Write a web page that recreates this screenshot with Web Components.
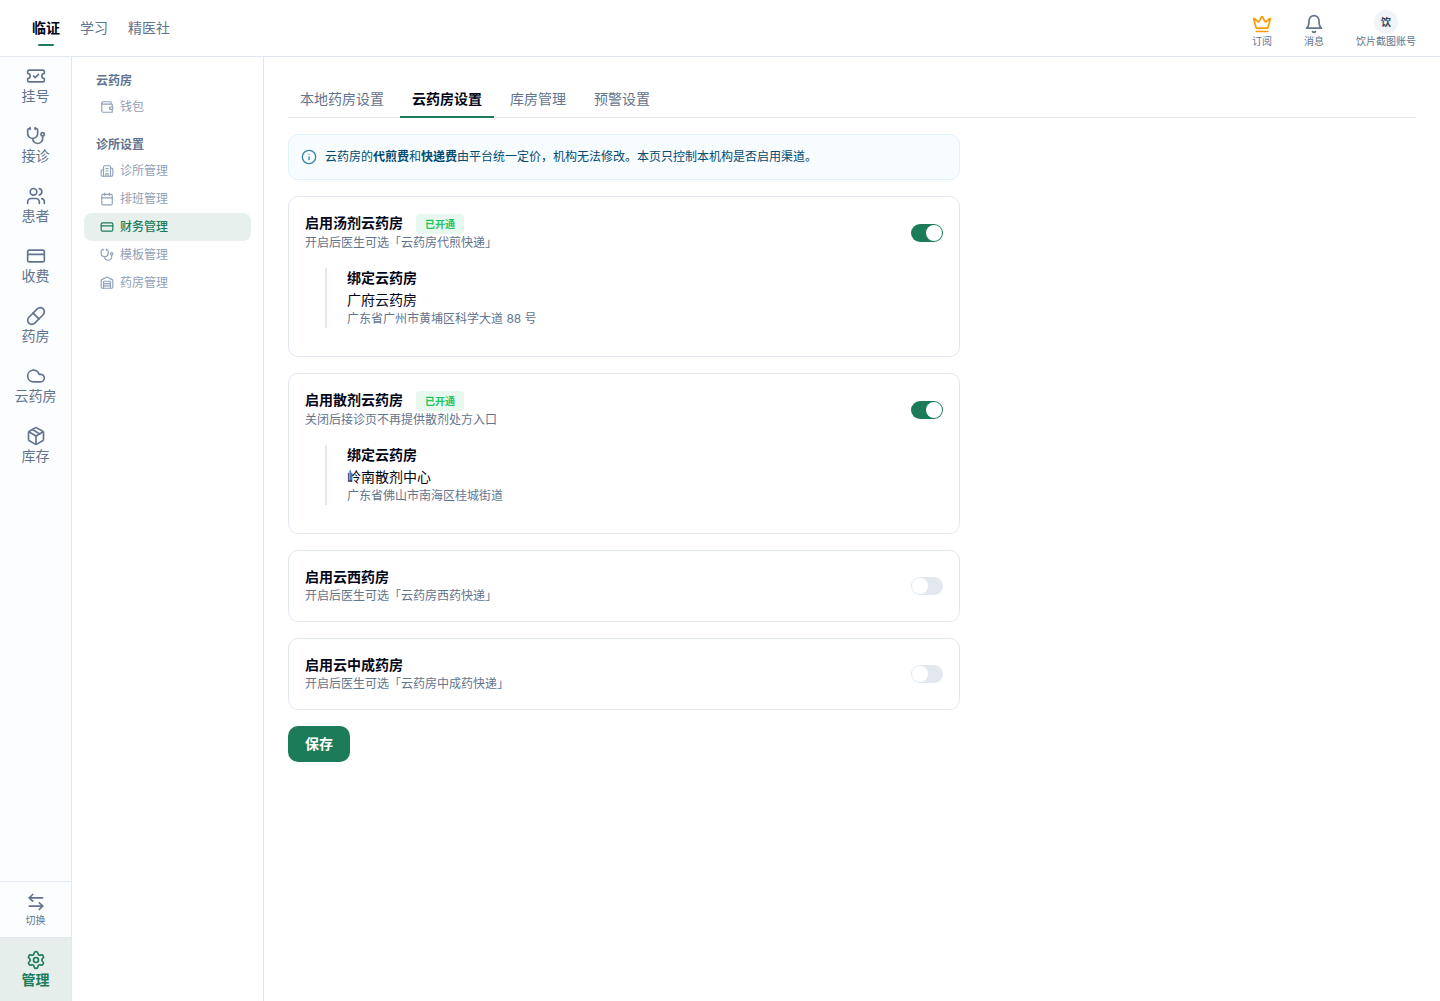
<!DOCTYPE html>
<html lang="zh-CN">
<head>
<meta charset="utf-8">
<meta name="viewport" content="width=device-width, initial-scale=1">
<title>云药房设置</title>
<style>
	:root {
		--primary: #1c7c5a;
		--primary-soft: #e8f0ee;
		--ink: #020618;
		--muted: #62748e;
		--faint: #90a1b9;
		--line: #e2e8f0;
	}
	body {
		margin: 0;
		color: var(--ink);
		background: #fff;
		font: 14px/20px Inter, "Noto Sans CJK SC", sans-serif;
	}
</style>
</head>
<body>
<app-shell>
	<top-bar slot="header"></top-bar>
	<nav-rail slot="rail"></nav-rail>
	<side-menu slot="menu"></side-menu>

	<tab-bar active="云药房设置"></tab-bar>
	<settings-form>
		<info-banner>云药房的<strong>代煎费</strong>和<strong>快递费</strong>由平台统一定价，机构无法修改。本页只控制本机构是否启用渠道。</info-banner>
		<channel-card heading="启用汤剂云药房" badge="已开通" on>
			<span slot="hint">开启后医生可选「云药房代煎快递」</span>
			<bound-pharmacy slot="detail" name="广府云药房">广东省广州市黄埔区科学大道 88 号</bound-pharmacy>
		</channel-card>
		<channel-card heading="启用散剂云药房" badge="已开通" on>
			<span slot="hint">关闭后接诊页不再提供散剂处方入口</span>
			<bound-pharmacy slot="detail" name="岭南散剂中心">广东省佛山市南海区桂城街道</bound-pharmacy>
		</channel-card>
		<channel-card heading="启用云西药房">
			<span slot="hint">开启后医生可选「云药房西药快递」</span>
		</channel-card>
		<channel-card heading="启用云中成药房">
			<span slot="hint">开启后医生可选「云药房中成药快递」</span>
		</channel-card>
	</settings-form>
</app-shell>

<script>
const ICONS = {
	ticket: `<path d="M2 9a3 3 0 0 1 0 6v2a2 2 0 0 0 2 2h16a2 2 0 0 0 2-2v-2a3 3 0 0 1 0-6V7a2 2 0 0 0-2-2H4a2 2 0 0 0-2 2Z"/><path d="m9 12 2 2 4-4"/>`,
	stethoscope: `<path d="M11 2v2"/><path d="M5 2v2"/><path d="M5 3H4a2 2 0 0 0-2 2v4a6 6 0 0 0 12 0V5a2 2 0 0 0-2-2h-1"/><path d="M8 15a6 6 0 0 0 12 0v-3"/><circle cx="20" cy="10" r="2"/>`,
	users: `<path d="M16 21v-2a4 4 0 0 0-4-4H6a4 4 0 0 0-4 4v2"/><circle cx="9" cy="7" r="4"/><path d="M22 21v-2a4 4 0 0 0-3-3.87"/><path d="M16 3.13a4 4 0 0 1 0 7.75"/>`,
	card: `<rect width="20" height="14" x="2" y="5" rx="2"/><path d="M2 10h20"/>`,
	pill: `<path d="m10.5 20.5 10-10a4.95 4.95 0 1 0-7-7l-10 10a4.95 4.95 0 1 0 7 7Z"/><path d="m8.5 8.5 7 7"/>`,
	cloud: `<path d="M17.5 19H9a7 7 0 1 1 6.71-9h1.79a4.5 4.5 0 1 1 0 9Z"/>`,
	box: `<path d="M11 21.73a2 2 0 0 0 2 0l7-4A2 2 0 0 0 21 16V8a2 2 0 0 0-1-1.73l-7-4a2 2 0 0 0-2 0l-7 4A2 2 0 0 0 3 8v8a2 2 0 0 0 1 1.73z"/><path d="M12 22V12"/><path d="M3.29 7 12 12l8.71-5"/><path d="m7.5 4.27 9 5.15"/>`,
	swap: `<path d="M8 3 4 7l4 4"/><path d="M4 7h16"/><path d="m16 21 4-4-4-4"/><path d="M20 17H4"/>`,
	gear: `<path d="M9.671 4.136a2.34 2.34 0 0 1 4.659 0 2.34 2.34 0 0 0 3.319 1.915 2.34 2.34 0 0 1 2.33 4.033 2.34 2.34 0 0 0 0 3.831 2.34 2.34 0 0 1-2.33 4.033 2.34 2.34 0 0 0-3.319 1.915 2.34 2.34 0 0 1-4.659 0 2.34 2.34 0 0 0-3.32-1.915 2.34 2.34 0 0 1-2.33-4.033 2.34 2.34 0 0 0 0-3.831A2.34 2.34 0 0 1 6.35 6.051a2.34 2.34 0 0 0 3.319-1.915"/><circle cx="12" cy="12" r="3"/>`,
	crown: `<path d="M11.562 3.266a.5.5 0 0 1 .876 0L15.39 8.87a1 1 0 0 0 1.516.294L21.183 5.5a.5.5 0 0 1 .798.519l-2.834 10.246a1 1 0 0 1-.956.734H5.81a1 1 0 0 1-.957-.734L2.02 6.02a.5.5 0 0 1 .798-.519l4.276 3.664a1 1 0 0 0 1.516-.294z"/><path d="M5 21h14"/>`,
	bell: `<path d="M6 8a6 6 0 0 1 12 0c0 7 3 9 3 9H3s3-2 3-9"/><path d="M10.3 21a1.94 1.94 0 0 0 3.4 0"/>`,
	wallet: `<path d="M17 14h.01"/><path d="M19 7V4a1 1 0 0 0-1-1H5a2 2 0 0 0 0 4h15a1 1 0 0 1 1 1v4h-3a2 2 0 0 0 0 4h3a1 1 0 0 0 1-1v-2a1 1 0 0 0-1-1"/><path d="M3 5v14a2 2 0 0 0 2 2h15a1 1 0 0 0 1-1v-4"/>`,
	clinic: `<path d="M10 12h4"/><path d="M10 8h4"/><path d="M14 21v-3a2 2 0 0 0-4 0v3"/><path d="M6 10H4a2 2 0 0 0-2 2v7a2 2 0 0 0 2 2h16a2 2 0 0 0 2-2V9a2 2 0 0 0-2-2h-2"/><path d="M6 21V5a2 2 0 0 1 2-2h8a2 2 0 0 1 2 2v16"/>`,
	calendar: `<path d="M8 2v4"/><path d="M16 2v4"/><rect width="18" height="18" x="3" y="4" rx="2"/><path d="M3 10h18"/>`,
	warehouse: `<path d="M18 21V10a1 1 0 0 0-1-1H7a1 1 0 0 0-1 1v11"/><path d="M22 19a2 2 0 0 1-2 2H4a2 2 0 0 1-2-2V8a2 2 0 0 1 1.132-1.803l7.95-3.974a2 2 0 0 1 1.837 0l7.948 3.974A2 2 0 0 1 22 8z"/><path d="M6 13h12"/><path d="M6 17h12"/>`,
	info: `<circle cx="12" cy="12" r="10"/><path d="M12 16v-4"/><path d="M12 8h.01"/>`,
};

class UiIcon extends HTMLElement {
	constructor() {
		super();
		this.attachShadow({ mode: "open" });
	}

	connectedCallback() {
		this.shadowRoot.innerHTML = `
		<style>
			:host { display: block; flex: none; width: var(--icon-size, 20px); height: var(--icon-size, 20px); }
			svg { display: block; width: 100%; height: 100%; }
		</style>
		<svg viewBox="0 0 24 24" fill="none" stroke="currentColor" stroke-width="2" stroke-linecap="round" stroke-linejoin="round" aria-hidden="true">${ICONS[this.getAttribute("name")]}</svg>`;
	}
}
customElements.define("ui-icon", UiIcon);

class AppShell extends HTMLElement {
	constructor() {
		super();
		this.attachShadow({ mode: "open" }).innerHTML = `
		<style>
			:host { display: flex; flex-direction: column; min-height: 100vh; }
			.body { display: flex; flex: 1; }
			main { flex: 1; min-width: 0; padding: 24px; }
		</style>
		<slot name="header"></slot>
		<div class="body">
			<slot name="rail"></slot>
			<slot name="menu"></slot>
			<main><slot></slot></main>
		</div>`;
	}
}
customElements.define("app-shell", AppShell);

class TopBar extends HTMLElement {
	constructor() {
		super();
		this.attachShadow({ mode: "open" }).innerHTML = `
		<style>
			:host { display: block; border-bottom: 1px solid var(--line); }
			header { display: flex; align-items: center; justify-content: space-between; height: 56px; padding: 0 24px 0 32px; }
			nav, .actions { display: flex; }
			nav { gap: 20px; }
			nav a { position: relative; padding: 8px 0; color: var(--muted); text-decoration: none; }
			nav a.active { color: var(--ink); font-weight: 600; }
			nav a.active::after {
				content: "";
				position: absolute;
				bottom: 0;
				left: 50%;
				width: 16px;
				height: 2px;
				margin-left: -8px;
				border-radius: 1px;
				background: var(--primary);
			}
			.actions { align-items: flex-end; gap: 32px; padding-top: 2px; }
			button {
				display: flex;
				flex-direction: column;
				align-items: center;
				padding: 0;
				border: 0;
				background: none;
				color: var(--muted);
				font: inherit;
				font-size: 10px;
				line-height: 14px;
				cursor: pointer;
			}
			.crown { color: #fe9a00; }
			.avatar { width: 24px; border-radius: 50%; background: #f1f5f9; color: #314158; font-weight: 600; line-height: 24px; }
		</style>
		<header>
			<nav>
				<a class="active" href="#clinic">临证</a>
				<a href="#study">学习</a>
				<a href="#club">精医社</a>
			</nav>
			<div class="actions">
				<button><ui-icon class="crown" name="crown"></ui-icon>订阅</button>
				<button><ui-icon name="bell"></ui-icon>消息</button>
				<button><span class="avatar">饮</span>饮片截图账号</button>
			</div>
		</header>`;
	}
}
customElements.define("top-bar", TopBar);

class NavRail extends HTMLElement {
	constructor() {
		super();
		const items = [
			["ticket", "挂号"],
			["stethoscope", "接诊"],
			["users", "患者"],
			["card", "收费"],
			["pill", "药房"],
			["cloud", "云药房"],
			["box", "库存"],
		];
		this.attachShadow({ mode: "open" }).innerHTML = `
		<style>
			:host {
				display: flex;
				flex-direction: column;
				justify-content: space-between;
				box-sizing: border-box;
				width: 72px;
				border-right: 1px solid var(--line);
				background: #fbfdff;
				color: var(--muted);
			}
			nav { display: flex; flex-direction: column; gap: 20px; padding: 9px 0; }
			a, button { display: flex; flex-direction: column; align-items: center; color: inherit; text-decoration: none; }
			button {
				width: 100%;
				padding: 10px 0 9px;
				border: 0;
				border-top: 1px solid var(--line);
				background: none;
				font: inherit;
				font-size: 10px;
				line-height: 16px;
				cursor: pointer;
			}
			.manage { padding: 12px 0 11px; border-top: 1px solid var(--line); background: #e5eeeb; color: var(--primary); font-weight: 600; }
		</style>
		<nav>${items.map(([icon, label]) => `<a href="#${icon}"><ui-icon name="${icon}"></ui-icon>${label}</a>`).join("")}</nav>
		<div>
			<button><ui-icon name="swap"></ui-icon>切换</button>
			<a class="manage" href="#manage"><ui-icon name="gear"></ui-icon>管理</a>
		</div>`;
	}
}
customElements.define("nav-rail", NavRail);

class SideMenu extends HTMLElement {
	constructor() {
		super();
		const groups = [
			["云药房", [["wallet", "钱包"]]],
			["诊所设置", [
				["clinic", "诊所管理"],
				["calendar", "排班管理"],
				["card", "财务管理"],
				["stethoscope", "模板管理"],
				["warehouse", "药房管理"],
			]],
		];
		this.attachShadow({ mode: "open" }).innerHTML = `
		<style>
			:host {
				--icon-size: 14px;
				display: block;
				box-sizing: border-box;
				width: 192px;
				padding: 16px 12px;
				border-right: 1px solid var(--line);
				font-size: 12px;
				line-height: 16px;
			}
			section + section { margin-top: 16px; }
			h2 { margin: 0 0 4px; padding: 0 12px; color: var(--muted); font-size: 12px; font-weight: 600; }
			a { display: flex; align-items: center; gap: 6px; padding: 6px 16px; border-radius: 8px; color: var(--faint); text-decoration: none; }
			a.active { background: var(--primary-soft); color: var(--primary); font-weight: 500; }
		</style>
		${groups.map(([title, links]) => `
		<section>
			<h2>${title}</h2>
			${links.map(([icon, label]) => `<a href="#${icon}"${label === "财务管理" ? ' class="active"' : ""}><ui-icon name="${icon}"></ui-icon>${label}</a>`).join("")}
		</section>`).join("")}`;
	}
}
customElements.define("side-menu", SideMenu);

class TabBar extends HTMLElement {
	constructor() {
		super();
		this.attachShadow({ mode: "open" });
	}

	connectedCallback() {
		const tabs = ["本地药房设置", "云药房设置", "库房管理", "预警设置"];
		const active = this.getAttribute("active");
		this.shadowRoot.innerHTML = `
		<style>
			:host { display: block; margin-bottom: 16px; }
			div { display: flex; gap: 4px; border-bottom: 1px solid var(--line); }
			button {
				margin-bottom: -1px;
				padding: 8px 12px 7px;
				border: 0;
				border-bottom: 2px solid transparent;
				background: none;
				color: var(--muted);
				font: inherit;
				cursor: pointer;
			}
			button[aria-selected="true"] { border-color: var(--primary); color: var(--ink); font-weight: 600; }
		</style>
		<div role="tablist">
			${tabs.map((tab) => `<button role="tab" aria-selected="${tab === active}">${tab}</button>`).join("")}
		</div>`;
	}
}
customElements.define("tab-bar", TabBar);

class SettingsForm extends HTMLElement {
	constructor() {
		super();
		this.attachShadow({ mode: "open" }).innerHTML = `
		<style>
			:host { display: block; max-width: 672px; }
			form { display: flex; flex-direction: column; align-items: stretch; gap: 16px; }
			button {
				align-self: flex-start;
				padding: 8px 17px;
				border: 0;
				border-radius: 10px;
				background: var(--primary);
				color: #fff;
				font: inherit;
				font-weight: 600;
				cursor: pointer;
			}
		</style>
		<form>
			<slot></slot>
			<button type="button">保存</button>
		</form>`;
	}
}
customElements.define("settings-form", SettingsForm);

class InfoBanner extends HTMLElement {
	constructor() {
		super();
		this.attachShadow({ mode: "open" }).innerHTML = `
		<style>
			:host {
				--icon-size: 16px;
				display: flex;
				align-items: center;
				gap: 8px;
				padding: 12px;
				border: 1px solid #dff2fe;
				border-radius: 10px;
				background: #f7fcff;
				color: #024a70;
				font-size: 12px;
			}
			ui-icon { color: #3b82a6; }
			::slotted(strong) { font-weight: 600; }
		</style>
		<ui-icon name="info"></ui-icon>
		<div><slot></slot></div>`;
	}
}
customElements.define("info-banner", InfoBanner);

class ToggleSwitch extends HTMLElement {
	constructor() {
		super();
		this.attachShadow({ mode: "open" });
	}

	connectedCallback() {
		this.shadowRoot.innerHTML = `
		<style>
			:host { display: block; flex: none; }
			input {
				display: flex;
				appearance: none;
				box-sizing: border-box;
				width: 32px;
				height: 18px;
				margin: 0;
				padding: 1px;
				border-radius: 9px;
				background: var(--line);
				cursor: pointer;
			}
			input::before { content: ""; width: 16px; height: 16px; border-radius: 50%; background: #fff; }
			input:checked { justify-content: flex-end; background: var(--primary); }
		</style>
		<input type="checkbox" role="switch" aria-label="${this.getAttribute("label")}"${this.hasAttribute("on") ? " checked" : ""}>`;
	}
}
customElements.define("toggle-switch", ToggleSwitch);

class ChannelCard extends HTMLElement {
	constructor() {
		super();
		this.attachShadow({ mode: "open" });
	}

	get heading() {
		return this.getAttribute("heading");
	}

	get badge() {
		return this.getAttribute("badge");
	}

	connectedCallback() {
		this.shadowRoot.innerHTML = `
		<style>
			:host { display: block; padding: 16px; border: 1px solid var(--line); border-radius: 10px; }
			header { display: flex; align-items: center; justify-content: space-between; gap: 16px; }
			.title { display: flex; align-items: baseline; gap: 13px; }
			h3 { margin: 0; font-size: 14px; font-weight: 600; }
			.badge { padding: 0 9px; border-radius: 4px; background: #e8f8ee; color: #22c55e; font-size: 10px; font-weight: 600; }
			.hint { color: var(--muted); font-size: 12px; line-height: 18px; }
		</style>
		<header>
			<div>
				<div class="title"><h3>${this.heading}</h3>${this.badge ? `<span class="badge">${this.badge}</span>` : ""}</div>
				<div class="hint"><slot name="hint"></slot></div>
			</div>
			<toggle-switch label="${this.heading}"${this.hasAttribute("on") ? " on" : ""}></toggle-switch>
		</header>
		<slot name="detail"></slot>`;
	}
}
customElements.define("channel-card", ChannelCard);

class BoundPharmacy extends HTMLElement {
	constructor() {
		super();
		this.attachShadow({ mode: "open" });
	}

	connectedCallback() {
		this.shadowRoot.innerHTML = `
		<style>
			:host { display: block; margin: 16px 0 12px 20px; padding-left: 20px; border-left: 2px solid var(--line); }
			h4 { margin: 0 0 2px; font-size: 14px; font-weight: 600; }
			p { margin: 0; }
			.address { color: var(--muted); font-size: 12px; line-height: 18px; }
		</style>
		<h4>绑定云药房</h4>
		<p>${this.getAttribute("name")}</p>
		<p class="address"><slot></slot></p>`;
	}
}
customElements.define("bound-pharmacy", BoundPharmacy);
</script>
</body>
</html>
